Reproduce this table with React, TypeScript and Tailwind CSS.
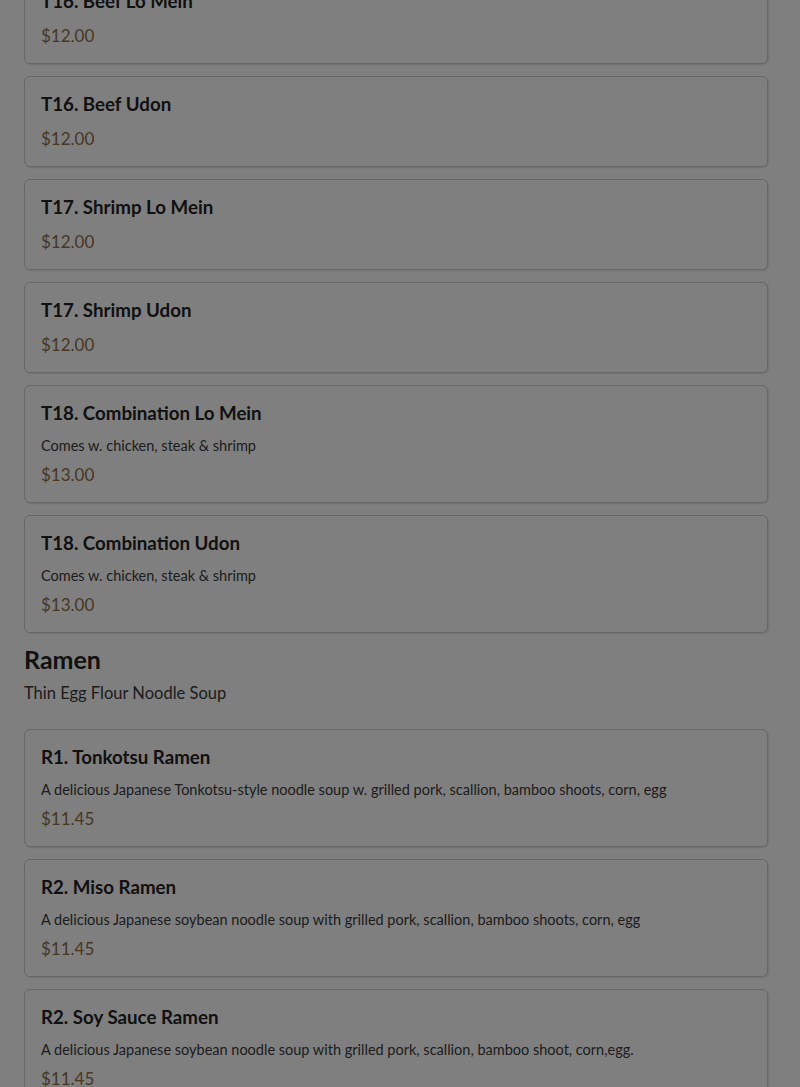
import React from "react";

type Item = { title: string; desc?: string; price: string };

const noodles: Item[] = [
  { title: "T16. Beef Lo Mein", price: "$12.00" },
  { title: "T16. Beef Udon", price: "$12.00" },
  { title: "T17. Shrimp Lo Mein", price: "$12.00" },
  { title: "T17. Shrimp Udon", price: "$12.00" },
  { title: "T18. Combination Lo Mein", desc: "Comes w. chicken, steak & shrimp", price: "$13.00" },
  { title: "T18. Combination Udon", desc: "Comes w. chicken, steak & shrimp", price: "$13.00" },
];

const ramen: Item[] = [
  {
    title: "R1. Tonkotsu Ramen",
    desc: "A delicious Japanese Tonkotsu-style noodle soup w. grilled pork, scallion, bamboo shoots, corn, egg",
    price: "$11.45",
  },
  {
    title: "R2. Miso Ramen",
    desc: "A delicious Japanese soybean noodle soup with grilled pork, scallion, bamboo shoots, corn, egg",
    price: "$11.45",
  },
  {
    title: "R2. Soy Sauce Ramen",
    desc: "A delicious Japanese soybean noodle soup with grilled pork, scallion, bamboo shoot, corn,egg.",
    price: "$11.45",
  },
  {
    title: "R3. Spicy Ramen",
    desc: "A delicious Japanese spicy noodle soup with grilled pork, scallion, bamboo shoots, corn, egg",
    price: "$11.45",
  },
];

function Card({ item }: { item: Item }) {
  return (
    <div className="rounded-md border border-[#cfcfcf] bg-white px-4 pt-4 pb-[15px] shadow-[1px_1px_2px_rgba(0,0,0,0.12)]">
      <div className="mb-3 text-[18.7px] font-bold leading-[22px] text-[#222]">{item.title}</div>
      {item.desc && (
        <div className="mb-[7px] text-[14.5px] leading-[20px] text-[#3a3a3a]">{item.desc}</div>
      )}
      <div className="text-[17px] leading-[24px] text-[#8e6f48]">{item.price}</div>
    </div>
  );
}

export default function App() {
  return (
    <div className="relative h-[1087px] overflow-hidden bg-white" style={{ fontFamily: "Lato, 'Noto Sans', sans-serif" }}>
      <div className="-mt-[27px] pl-6 pr-8">
        <div className="flex flex-col gap-3">
          {noodles.map((it, i) => (
            <Card key={i} item={it} />
          ))}
        </div>
        <div className="pt-[11px]">
          <h2 className="text-[25px] font-bold leading-[30px] text-[#222]">Ramen</h2>
          <p className="mt-[7px] text-[16.5px] leading-[24px] text-[#3a3a3a]">Thin Egg Flour Noodle Soup</p>
        </div>
        <div className="mt-[24px] flex flex-col gap-3">
          {ramen.map((it, i) => (
            <Card key={i} item={it} />
          ))}
        </div>
      </div>
      <div className="absolute inset-0 bg-black/50" />
    </div>
  );
}
